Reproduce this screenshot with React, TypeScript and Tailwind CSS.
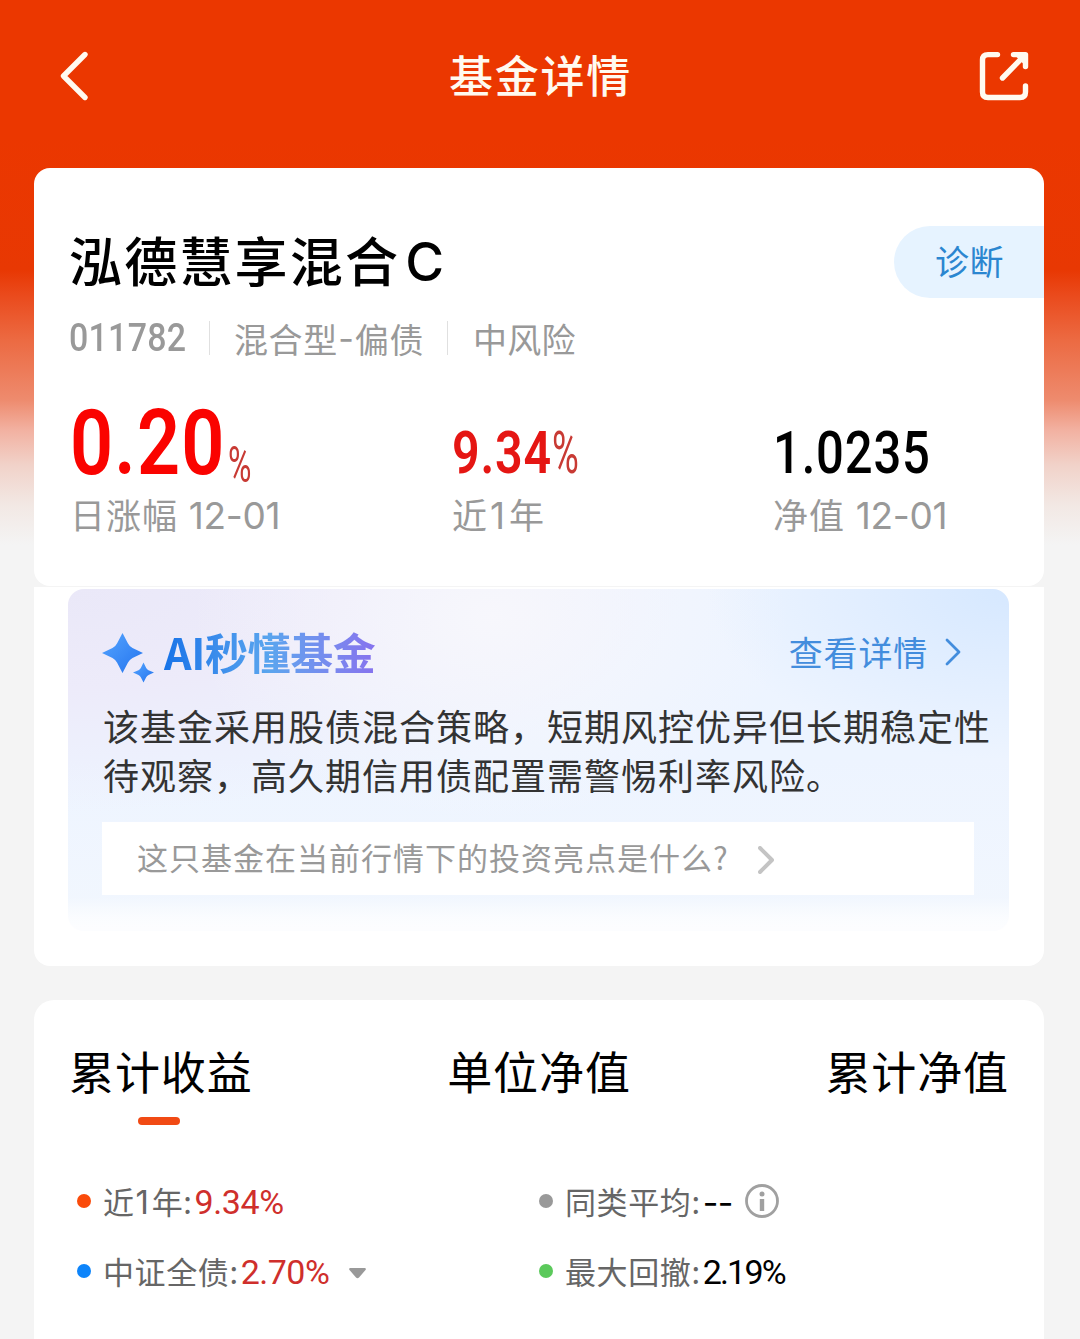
import type { ReactNode } from 'react';
import clsx from 'clsx';

const tabs = ['累计收益', '单位净值', '累计净值'];

function ChevronRight({ className }: { className?: string }) {
  return (
    <svg viewBox="0 0 16 28" fill="none" stroke="currentColor" strokeLinecap="round" strokeLinejoin="round" className={className}>
      <path d="M2 2 L14 14 L2 26" />
    </svg>
  );
}

function Header() {
  return (
    <header className="flex h-[168px] items-start justify-between pt-[48px] pl-[58px] pr-[48px] text-[#fffaf0]">
      <svg width="56" height="56" viewBox="0 0 56 56" fill="none" stroke="currentColor" strokeWidth="5.4" strokeLinecap="round" strokeLinejoin="round">
        <path d="M27 6.5 L5.5 28 L27 49.5" />
      </svg>
      <h1 className="mr-[9px] h-[52px] text-[44px] leading-[53px] font-medium tracking-[1.8px]">基金详情</h1>
      <svg width="56" height="56" viewBox="0 0 56 56" fill="none" stroke="currentColor" strokeWidth="5.4" strokeLinecap="round" strokeLinejoin="round">
        <path d="M21.5 6.6 H12 Q6.5 6.6 6.5 12 V44 Q6.5 49.5 12 49.5 H44 Q49.5 49.5 49.5 44 V38" />
        <path d="M37.5 6.6 H49.5 V18.5" />
        <path d="M48 8 L26.5 30" />
        <path d="M41 8 H48.5 V15.5 Z" fill="currentColor" strokeWidth="2" />
      </svg>
    </header>
  );
}

// Narrow figures, scaled horizontally from Roboto
function Figure({ children, className }: { children: ReactNode; className?: string }) {
  return (
    <span className={clsx('block origin-left whitespace-nowrap font-[Roboto,sans-serif]', className)}>
      {children}
    </span>
  );
}

// Date digits and the wide hyphen next to Chinese labels
function Latin({ children, className }: { children: ReactNode; className?: string }) {
  return <span className={clsx('font-[Inter,sans-serif]', className)}>{children}</span>;
}

function Summary() {
  return (
    <section className="h-[418px] overflow-hidden rounded-2xl bg-white">
      <div className="flex items-start justify-between pt-[58px] pl-[35px]">
        <h2 className="flex h-[66px] text-[53px] leading-[66px] font-medium tracking-[2.2px] text-black">
          泓德慧享混合<Latin className="ml-[5px] pt-[3px] text-[53px]">C</Latin>
        </h2>
        <div className="h-[72px] w-[150px] rounded-l-full bg-[#e6f3ff] pl-[41px] text-[34px] leading-[69px] tracking-[0.5px] text-[#2b86d0]">
          诊断
        </div>
      </div>

      <div className="mt-[20px] flex h-[40px] items-center pl-[35px] text-[34px] leading-[39px] tracking-[0.8px] text-[#999]">
        <div className="w-[140px]">
          <Figure className="w-[120px] scale-x-[0.87] pt-[1px] text-[39px] font-medium tracking-[0.3px]">011782</Figure>
        </div>
        <div className="h-[34px] w-px bg-[#e0e0e0]" />
        <div className="flex w-[237px] pl-[24px] tracking-[0.6px]">
          混合型<Latin className="w-[17px] text-center">-</Latin>偏债
        </div>
        <div className="h-[34px] w-px bg-[#e0e0e0]" />
        <div className="pl-[25px] tracking-[0.2px]">中风险</div>
      </div>

      <div className="mt-[47px] flex pl-[36px] text-[35px] leading-[42px] tracking-[1px] text-[#999]">
        <div className="w-[382px]">
          <div className="flex h-[88px]">
            <div className="w-[158px]">
              <Figure className="scale-x-[0.83] text-[91px] leading-[76px] font-semibold tracking-[1.4px] text-[#fa0300]">0.20</Figure>
            </div>
            <Figure className="scale-x-[0.64] pt-[37px] text-[50px] leading-[46px] text-[#c83a34]">%</Figure>
          </div>
          <div>日涨幅 <Latin className="ml-[2px] text-[37px] tracking-[-0.3px]">12-01</Latin></div>
        </div>
        <div className="w-[321px]">
          <div className="flex h-[88px] pt-[17px] text-[59px] leading-[62px]">
            <div className="w-[100px]">
              <Figure className="scale-x-[0.82] font-semibold text-[#e51613]">9.34</Figure>
            </div>
            <Figure className="scale-x-[0.62] text-[#c83a34]">%</Figure>
          </div>
          <div>近<Latin className="mr-[3px] ml-[2px] text-[37px]">1</Latin>年</div>
        </div>
        <div>
          <div className="h-[88px] pt-[17px] text-[59px] leading-[62px]">
            <Figure className="w-[182px] scale-x-[0.83] font-medium text-black">1.0235</Figure>
          </div>
          <div>净值 <Latin className="ml-[2px] text-[37px] tracking-[-0.3px]">12-01</Latin></div>
        </div>
      </div>
    </section>
  );
}

function AiInsight() {
  return (
    <section className="h-[379px] rounded-b-2xl bg-white px-[34px] pt-[2px]">
      <div className="h-[342px] w-[941px] rounded-2xl bg-[linear-gradient(to_bottom,transparent_0%,transparent_90%,#ffffffaa_96%,#ffffffcc_100%),radial-gradient(ellipse_32%_50%_at_100%_0%,#d6e8ff_0%,#d6e8ff00_100%),radial-gradient(ellipse_32%_60%_at_45%_8%,#f7f7fc_0%,#f7f7fc00_100%),radial-gradient(ellipse_65%_65%_at_0%_0%,#eae8f8_0%,#edebfa_45%,#edebfa00_100%),linear-gradient(to_bottom,#edf4ff_0%,#edf4ff_50%,#f2f7fe_100%)] px-[34px] pt-[40px]">
        <div className="flex h-[54px] items-start">
          <svg width="54" height="54" viewBox="0 0 54 54">
            <defs>
              <linearGradient id="spark" x1="0" y1="0" x2="1" y2="1">
                <stop offset="0" stopColor="#55a5ff" />
                <stop offset="1" stopColor="#2373ee" />
              </linearGradient>
            </defs>
            <path fill="url(#spark)" d="M20.5 4 L26 14.5 Q27.5 17.500 30.500 19 L41 24 L30.500 29 Q27.500 30.500 26 33.500 L20.500 44 L15 33.500 Q13.500 30.500 10.500 29 L0 24 L10.500 19 Q13.500 17.500 15 14.500Z" />
            <path fill="url(#spark)" d="M41.500 33.500 L44.200 39 Q45 40.500 46.500 41.200 L52 43.500 L46.500 46 Q45 46.700 44.200 48.200 L41.500 53.500 L38.800 48.200 Q38 46.700 36.500 46 L31 43.500 L36.500 41.200 Q38 40.500 38.800 39Z" />
          </svg>
          <h3 className="ml-[8px] bg-gradient-to-r from-[#1673e8] via-[#5aa5ee] to-[#8673ee] bg-clip-text text-[43px] leading-[45px] font-bold tracking-[-0.4px] text-transparent">
            AI秒懂基金
          </h3>
          <div className="ml-auto flex items-center pr-[14px] text-[34px] leading-[46px] tracking-[0.8px] text-[#438ddd]">
            查看详情
            <ChevronRight className="ml-[17px] h-[28px] w-[16px] stroke-[2.8]" />
          </div>
        </div>
        <p className="mt-[18px] pl-px text-[36px] leading-[49px] tracking-[1px] whitespace-nowrap text-[#333]">
          该基金采用股债混合策略，短期风控优异但长期稳定性
          <br />
          待观察，高久期信用债配置需警惕利率风险。
        </p>
        <div className="mt-[23px] flex h-[73px] w-[872px] items-center bg-white pl-[35px] text-[31px] tracking-[1px] text-[#999]">
          <span className="h-[73px] leading-[70px]">这只基金在当前行情下的投资亮点是什么?</span>
          <ChevronRight className="ml-[29px] mt-[2px] h-[28px] w-[16px] stroke-[4] text-[#c4c4c4]" />
        </div>
      </div>
    </section>
  );
}

function Legend({ dot, label, value, valueClass, children }: { dot: string; label: ReactNode; value: string; valueClass: string; children?: ReactNode }) {
  return (
    <div className="flex h-[70px] w-[462px] items-center">
      <span className={clsx('size-[14px] rounded-full', dot)} />
      <span className="ml-[12px] h-[70px] text-[31px] leading-[69px] tracking-[0.6px] text-[#666]">{label}:</span>
      <span className={clsx('ml-[2px] pt-[2px] text-[34px]', valueClass)}>{value}</span>
      {children}
    </div>
  );
}

function Performance() {
  return (
    <section className="mt-[34px] h-[339px] rounded-t-[20px] bg-white">
      <div className="flex justify-between pt-[41px] pl-[35px] pr-[35px]">
        {tabs.map((tab, index) => (
          <div key={tab} className="flex flex-col items-center text-[45px] leading-[60px] tracking-[0.9px] text-black">
            {tab}
            {index === 0 && <div className="mt-[16px] mr-[4px] h-[8px] w-[42px] rounded-full bg-[#f14a14]" />}
          </div>
        ))}
      </div>

      <div className="mt-[41px] flex flex-wrap pl-[43px]">
        <Legend
          dot="bg-[#fa4b0a]"
          label={<>近<Latin className="mr-[2px] ml-[1px] text-[33px]">1</Latin>年</>}
          value="9.34%"
          valueClass="font-[Roboto,sans-serif] tracking-[-0.4px] text-[#cf2f2c]"
        />
        <Legend dot="bg-[#999]" label="同类平均" value="--" valueClass="font-[Inter,sans-serif] tracking-[-0.5px] text-black">
          <svg width="34" height="34" viewBox="0 0 34 34" className="ml-[12px]" fill="none" stroke="#a0a0a0">
            <circle cx="17" cy="17" r="15.5" strokeWidth="2.8" />
            <circle cx="17" cy="10" r="2.5" fill="#a0a0a0" stroke="none" />
            <path d="M17 15 V27" strokeWidth="4.4" />
          </svg>
        </Legend>
        <Legend dot="bg-[#0d84fa]" label="中证全债" value="2.70%" valueClass="font-[Roboto,sans-serif] tracking-[-0.5px] text-[#cf2f2c]">
          <svg width="17" height="11" viewBox="0 0 17 11" className="mt-[4px] ml-[20px]" fill="#999">
            <path d="M1 0 H16 Q17.5 0.5 16.5 2 L10 9.5 Q8.5 11 7 9.5 L0.5 2 Q-0.5 0.5 1 0Z" />
          </svg>
        </Legend>
        <Legend dot="bg-[#5bc95b]" label="最大回撤" value="2.19%" valueClass="font-[Roboto,sans-serif] tracking-[-1.8px] text-black" />
      </div>
    </section>
  );
}

export default function App() {
  return (
    <div className="h-[1339px] w-[1080px] overflow-hidden bg-[#f4f4f4] bg-[linear-gradient(to_bottom,#eb3700_0px,#eb3700_138px,#e83803_270px,#ea4a1c_295px,#ec6a42_340px,#ee8b6e_400px,#f2b1a1_430px,#f1d2c9_465px,#f2e8e4_505px,#f4f4f4_545px)] font-['Noto_Sans_CJK_SC',sans-serif]">
      <Header />
      <main className="ml-[34px] w-[1010px]">
        <div className="bg-[linear-gradient(to_bottom,transparent_400px,#f4f4f4_400px)]">
          <Summary />
          <div className="h-px" />
          <AiInsight />
        </div>
        <Performance />
      </main>
    </div>
  );
}
